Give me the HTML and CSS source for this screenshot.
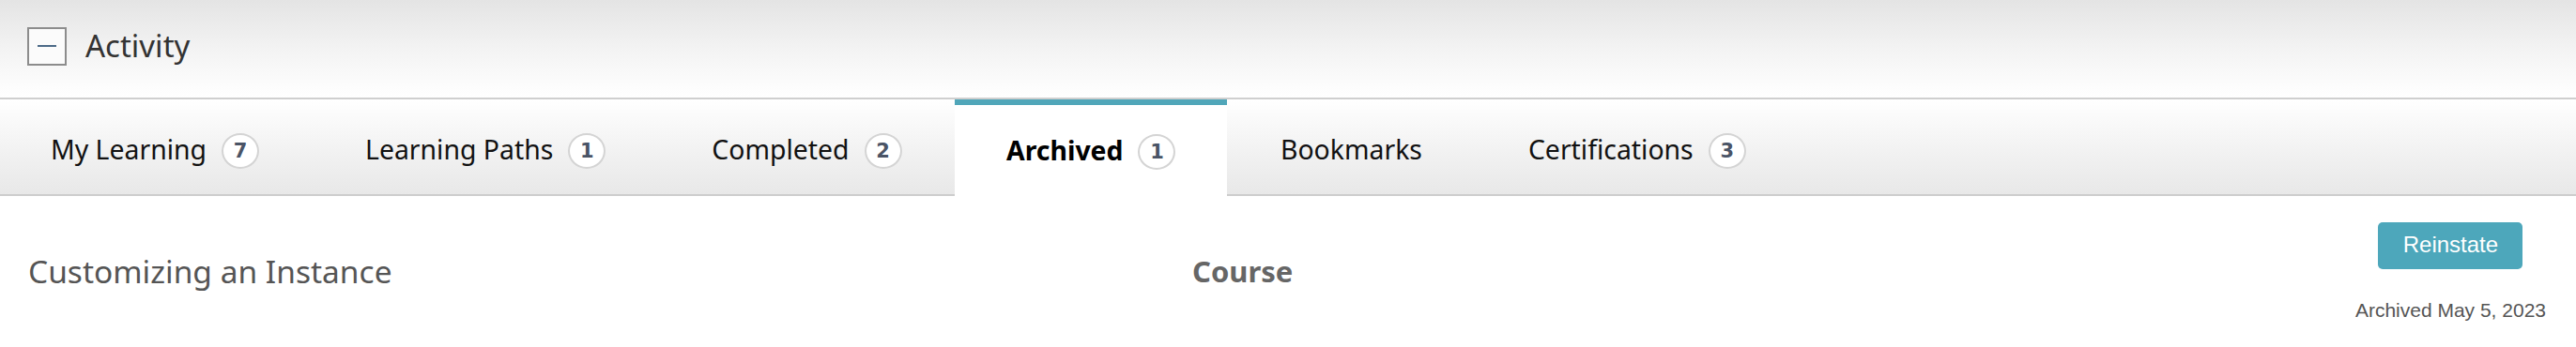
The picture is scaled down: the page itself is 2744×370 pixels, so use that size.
FILE: index.html
```html
<!DOCTYPE html>
<html>
<head>
<meta charset="utf-8">
<link rel="stylesheet" href="styles.css">
</head>
<body>
<div class="panel">
  <header class="panel-head">
    <button class="toggle" aria-label="Collapse"><span class="minus"></span></button>
    <h2 class="panel-title">Activity</h2>
  </header>
  <nav class="tabs">
    <div class="tab"><span class="tab-label">My Learning</span><span class="badge">7</span></div>
    <div class="tab"><span class="tab-label">Learning Paths</span><span class="badge">1</span></div>
    <div class="tab"><span class="tab-label">Completed</span><span class="badge">2</span></div>
    <div class="tab active"><span class="tab-label">Archived</span><span class="badge">1</span></div>
    <div class="tab"><span class="tab-label">Bookmarks</span></div>
    <div class="tab"><span class="tab-label">Certifications</span><span class="badge">3</span></div>
  </nav>
  <section class="row">
    <div class="item-title">Customizing an Instance</div>
    <div class="item-type">Course</div>
    <div class="item-actions">
      <button class="btn">Reinstate</button>
      <div class="item-date">Archived May 5, 2023</div>
    </div>
  </section>
</div>
</body>
</html>
```
FILE: styles.css
```css
html, body {
  margin: 0;
  padding: 0;
  background: #fff;
}
body {
  width: 2744px;
  height: 370px;
  overflow: hidden;
  font-family: "Noto Sans", "Open Sans", sans-serif;
}
.panel-head {
  height: 98px;
  padding-bottom: 6px;
  border-bottom: 2px solid #cfcfcf;
  background: linear-gradient(to bottom, #e4e4e4 0%, #f3f3f3 50%, #ffffff 100%);
  display: flex;
  align-items: center;
  padding-left: 29px;
  gap: 20px;
  box-sizing: content-box;
}
.toggle {
  width: 42px;
  height: 41px;
  box-sizing: border-box;
  border: 2px solid #8c8c8c;
  background: #fbfbfb;
  padding: 0;
  margin: 0;
  display: flex;
  align-items: center;
  justify-content: center;
}
.minus {
  display: block;
  width: 20px;
  height: 2px;
  background: #4c6a87;
}
.panel-title {
  margin: 0;
  font-family: "Noto Sans", sans-serif;
  font-weight: 400;
  font-size: 33px;
  color: #333;
  line-height: 1;
  padding-bottom: 2px;
}
.tabs {
  display: flex;
  height: 101px;
  border-bottom: 2px solid #cdcdcd;
  background: linear-gradient(to bottom, #ffffff 0%, #f4f4f4 45%, #e8e8e8 100%);
}
.tab {
  display: flex;
  align-items: center;
  gap: 16px;
  padding: 4px 56.5px 0;
  font-size: 28.4px;
  color: #111;
}
.tab:first-child {
  padding-left: 54px;
}
.tab.active {
  background: #fff;
  box-shadow: inset 0 6px 0 #50a6b9;
  margin-bottom: -2px;
  padding: 4px 55px 0;
  font-weight: 700;
  color: #000;
}
.badge {
  width: 40px;
  height: 38px;
  box-sizing: border-box;
  border: 2px solid #d4d4d4;
  border-radius: 50%;
  background: #fff;
  display: flex;
  align-items: center;
  justify-content: center;
  font-family: "DejaVu Sans", sans-serif;
  font-weight: 700;
  font-size: 21px;
  color: #4a5466;
  margin-top: 4px;
}
.row {
  display: grid;
  grid-template-columns: 1240px 1fr auto;
  padding: 0 32px 0 30px;
  height: 161px;
  font-family: "Noto Sans", sans-serif;
}
.item-title {
  padding-top: 60px;
  font-size: 33.5px;
  line-height: 40px;
  color: #555;
}
.item-type {
  padding-top: 60px;
  font-size: 31px;
  line-height: 40px;
  font-weight: 700;
  color: #666;
}
.item-actions {
  padding-top: 28px;
  display: flex;
  flex-direction: column;
  align-items: center;
  font-family: "Liberation Sans", Arial, sans-serif;
}
.btn {
  width: 154px;
  height: 50px;
  border: 0;
  border-radius: 5px;
  background: #4da7bb;
  color: #fff;
  font-family: "Liberation Sans", Arial, sans-serif;
  font-size: 24px;
  padding: 0 0 2px;
}
.item-date {
  margin-top: 31px;
  font-size: 21px;
  line-height: 25px;
  color: #555;
  white-space: nowrap;
}
```
